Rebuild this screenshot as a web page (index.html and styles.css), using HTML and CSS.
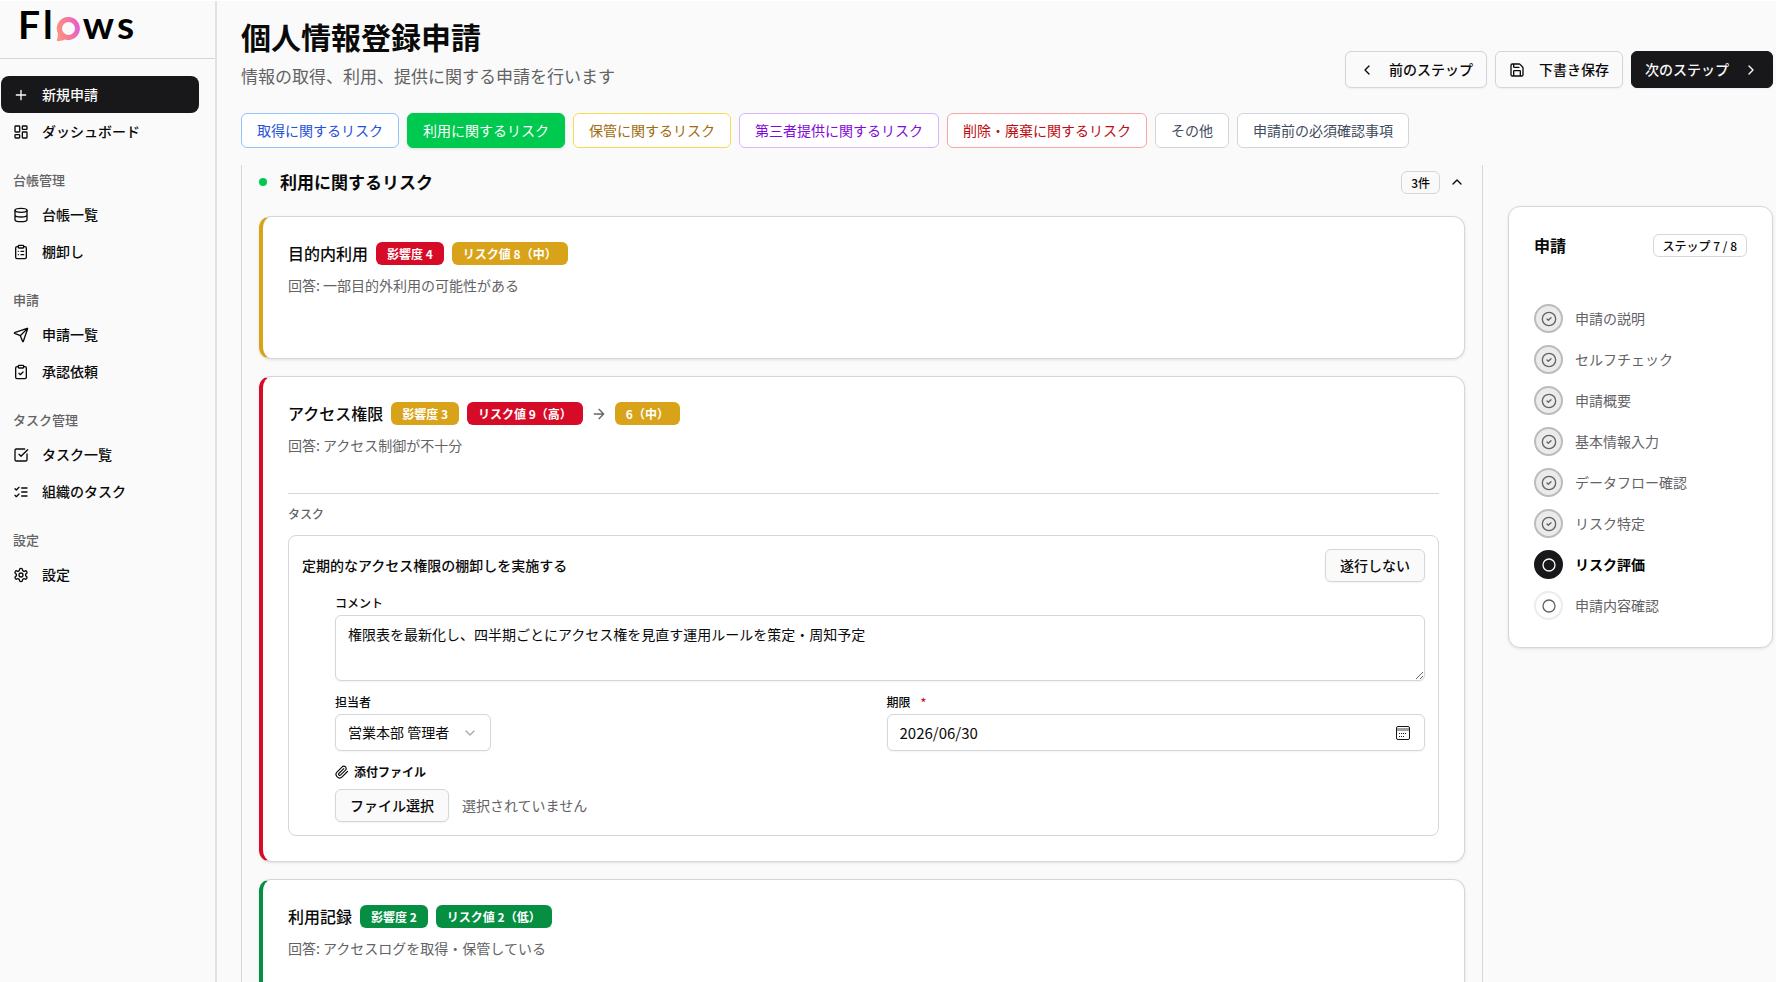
FILE: index.html
```html
<!DOCTYPE html>
<html lang="ja">
<head>
<meta charset="utf-8">
<meta name="viewport" content="width=device-width, initial-scale=1">
<title>個人情報登録申請 | Flows</title>
<link rel="stylesheet" href="styles.css">
</head>
<body>
<svg class="sprite" aria-hidden="true">
  <symbol id="check-circle" viewBox="0 0 24 24"><circle cx="12" cy="12" r="10"/><path d="m9 12 2 2 4-4"/></symbol>
  <symbol id="circle" viewBox="0 0 24 24"><circle cx="12" cy="12" r="9"/></symbol>
  <symbol id="chevron-left" viewBox="0 0 24 24"><path d="m15 18-6-6 6-6"/></symbol>
  <symbol id="chevron-right" viewBox="0 0 24 24"><path d="m9 18 6-6-6-6"/></symbol>
  <symbol id="chevron-up" viewBox="0 0 24 24"><path d="m18 15-6-6-6 6"/></symbol>
  <symbol id="chevron-down" viewBox="0 0 24 24"><path d="m6 9 6 6 6-6"/></symbol>
</svg>
<div class="app">
  <aside class="sidebar">
    <a class="logo" href="#" aria-label="Flows">
      <span class="logo-letter">F</span>
      <span class="logo-letter">l</span>
      <svg class="logo-mark" viewBox="0 0 24 24" aria-hidden="true">
        <defs><linearGradient id="mark" x1="0" y1="0.6" x2="1" y2="0.4"><stop offset="0" stop-color="#fb9483"/><stop offset="0.5" stop-color="#f57a98"/><stop offset="1" stop-color="#e35bd8"/></linearGradient></defs>
        <path fill="url(#mark)" fill-rule="evenodd" d="M12.500 0A11.500 11.500 0 1 1 9 22.500C6.500 23.600 3.500 24 1.500 24C.600 24 .700 23.200 1 22.500C1.600 21 1.800 19.500 1.900 16.500A11.500 11.500 0 0 1 12.500 0ZM12.500 5A6.500 6.500 0 1 0 12.500 18A6.500 6.500 0 1 0 12.500 5Z"/>
      </svg>
      <span class="logo-letter">w</span>
      <span class="logo-letter">s</span>
    </a>
    <nav class="nav">
      <a class="nav-item is-primary" href="#"><svg class="icon" viewBox="0 0 24 24"><path d="M5 12h14M12 5v14"/></svg>新規申請</a>
      <a class="nav-item" href="#"><svg class="icon" viewBox="0 0 24 24"><rect x="3" y="3" width="7" height="9" rx="1"/><rect x="14" y="3" width="7" height="5" rx="1"/><rect x="14" y="12" width="7" height="9" rx="1"/><rect x="3" y="16" width="7" height="5" rx="1"/></svg>ダッシュボード</a>
      <h2 class="nav-label">台帳管理</h2>
      <a class="nav-item" href="#"><svg class="icon" viewBox="0 0 24 24"><ellipse cx="12" cy="5" rx="9" ry="3"/><path d="M3 5v14a9 3 0 0 0 18 0V5M3 12a9 3 0 0 0 18 0"/></svg>台帳一覧</a>
      <a class="nav-item" href="#"><svg class="icon" viewBox="0 0 24 24"><rect x="8" y="2" width="8" height="4" rx="1"/><path d="M16 4h2a2 2 0 0 1 2 2v14a2 2 0 0 1-2 2H6a2 2 0 0 1-2-2V6a2 2 0 0 1 2-2h2M12 11h4M12 16h4M8 11h.01M8 16h.01"/></svg>棚卸し</a>
      <h2 class="nav-label">申請</h2>
      <a class="nav-item" href="#"><svg class="icon" viewBox="0 0 24 24"><path d="M14.500 21.700a.5.5 0 0 0 .9 0l6.500-19a.5.5 0 0 0-.6-.6l-19 6.500a.5.5 0 0 0 0 .9l7.900 3.200a2 2 0 0 1 1.100 1.100zM21.900 2.100 10.900 13.100"/></svg>申請一覧</a>
      <a class="nav-item" href="#"><svg class="icon" viewBox="0 0 24 24"><rect x="8" y="2" width="8" height="4" rx="1"/><path d="M16 4h2a2 2 0 0 1 2 2v14a2 2 0 0 1-2 2H6a2 2 0 0 1-2-2V6a2 2 0 0 1 2-2h2m1 10 2 2 4-4"/></svg>承認依頼</a>
      <h2 class="nav-label">タスク管理</h2>
      <a class="nav-item" href="#"><svg class="icon" viewBox="0 0 24 24"><path d="M21 10.500V19a2 2 0 0 1-2 2H5a2 2 0 0 1-2-2V5a2 2 0 0 1 2-2h12.500M9 11l3 3L22 4"/></svg>タスク一覧</a>
      <a class="nav-item" href="#"><svg class="icon" viewBox="0 0 24 24"><path d="m3 17 2 2 4-4M3 7l2 2 4-4M13 6h8M13 12h8M13 18h8"/></svg>組織のタスク</a>
      <h2 class="nav-label">設定</h2>
      <a class="nav-item" href="#"><svg class="icon" viewBox="0 0 24 24"><path d="M12.220 2h-.44a2 2 0 0 0-2 2v.18a2 2 0 0 1-1 1.730l-.43.25a2 2 0 0 1-2 0l-.15-.08a2 2 0 0 0-2.730.73l-.22.38a2 2 0 0 0 .73 2.730l.15.1a2 2 0 0 1 1 1.720v.51a2 2 0 0 1-1 1.740l-.15.09a2 2 0 0 0-.73 2.730l.22.38a2 2 0 0 0 2.730.73l.15-.08a2 2 0 0 1 2 0l.43.25a2 2 0 0 1 1 1.730V20a2 2 0 0 0 2 2h.44a2 2 0 0 0 2-2v-.18a2 2 0 0 1 1-1.730l.43-.25a2 2 0 0 1 2 0l.15.08a2 2 0 0 0 2.730-.73l.22-.39a2 2 0 0 0-.73-2.730l-.15-.08a2 2 0 0 1-1-1.740v-.5a2 2 0 0 1 1-1.740l.15-.09a2 2 0 0 0 .73-2.730l-.22-.38a2 2 0 0 0-2.730-.73l-.15.08a2 2 0 0 1-2 0l-.43-.25a2 2 0 0 1-1-1.730V4a2 2 0 0 0-2-2z"/><circle cx="12" cy="12" r="3"/></svg>設定</a>
    </nav>
  </aside>

  <main class="main">
    <header class="page-head">
      <div>
        <h1 class="page-title">個人情報登録申請</h1>
        <p class="page-sub">情報の取得、利用、提供に関する申請を行います</p>
      </div>
      <div class="actions">
        <button class="btn btn-lg" type="button"><svg class="icon"><use href="#chevron-left"/></svg>前のステップ</button>
        <button class="btn btn-lg" type="button"><svg class="icon" viewBox="0 0 24 24"><path d="M15.200 3a2 2 0 0 1 1.400.6l3.800 3.800a2 2 0 0 1 .6 1.400V19a2 2 0 0 1-2 2H5a2 2 0 0 1-2-2V5a2 2 0 0 1 2-2zM17 21v-7a1 1 0 0 0-1-1H8a1 1 0 0 0-1 1v7M7 3v4a1 1 0 0 0 1 1h7"/></svg>下書き保存</button>
        <button class="btn btn-lg btn-dark" type="button">次のステップ<svg class="icon"><use href="#chevron-right"/></svg></button>
      </div>
    </header>

    <div class="tabs">
      <button class="tab tab-blue" type="button">取得に関するリスク</button>
      <button class="tab tab-green" type="button">利用に関するリスク</button>
      <button class="tab tab-yellow" type="button">保管に関するリスク</button>
      <button class="tab tab-purple" type="button">第三者提供に関するリスク</button>
      <button class="tab tab-red" type="button">削除・廃棄に関するリスク</button>
      <button class="tab" type="button">その他</button>
      <button class="tab" type="button">申請前の必須確認事項</button>
    </div>

    <div class="content">
      <section class="panel">
        <div class="section-head">
          <span class="dot"></span>
          <h2 class="section-title">利用に関するリスク</h2>
          <span class="outline-badge">3件</span>
          <button class="fold" type="button" aria-label="折りたたむ"><svg class="icon"><use href="#chevron-up"/></svg></button>
        </div>

        <article class="card edge-amber">
          <div class="risk">
            <div class="risk-row"><h3 class="risk-title">目的内利用</h3><span class="badge red">影響度 4</span><span class="badge amber">リスク値 8（中）</span></div>
            <p class="answer">回答: 一部目的外利用の可能性がある</p>
          </div>
        </article>

        <article class="card edge-red">
          <div class="risk">
            <div class="risk-row"><h3 class="risk-title">アクセス権限</h3><span class="badge amber">影響度 3</span><span class="badge red">リスク値 9（高）</span><svg class="icon arrow" viewBox="0 0 24 24"><path d="M5 12h14M12 5l7 7-7 7"/></svg><span class="badge amber">6（中）</span></div>
            <p class="answer">回答: アクセス制御が不十分</p>
          </div>
          <div class="tasks">
            <h4 class="tasks-label">タスク</h4>
            <div class="task">
              <div class="task-head">
                <span class="task-title">定期的なアクセス権限の棚卸しを実施する</span>
                <button class="btn" type="button">遂行しない</button>
              </div>
              <div class="form">
                <div class="field">
                  <label class="label" for="comment">コメント</label>
                  <textarea class="control textarea" id="comment">権限表を最新化し、四半期ごとにアクセス権を見直す運用ルールを策定・周知予定</textarea>
                </div>
                <div class="columns">
                  <div class="field">
                    <label class="label" for="owner">担当者</label>
                    <div class="overlay select-box">
                      <select class="control select" id="owner"><option>営業本部 管理者</option></select>
                      <svg class="icon select-icon"><use href="#chevron-down"/></svg>
                    </div>
                  </div>
                  <div class="field">
                    <label class="label" for="due">期限<span class="required">*</span></label>
                    <div class="overlay">
                      <input class="control date" id="due" type="text" value="2026/06/30">
                      <button class="calendar" type="button" aria-label="日付を選択"><svg width="14" height="14" viewBox="0 0 14 14"><path d="M1 2h12v3H1z" fill="#a1a1a4"/><rect x="0.500" y="0.500" width="13" height="13" rx="1.500" fill="none" stroke="#18181b"/><path fill="#18181b" d="M5 7h1v1h-1zM7 7h1v1h-1zM9 7h1v1h-1zM3 7h1v1h-1zM3 10h1v1h-1zM5 10h1v1h-1zM7 10h1v1h-1z"/></svg></button>
                    </div>
                  </div>
                </div>
                <div class="field attach">
                  <span class="label"><svg class="icon clip" viewBox="0 0 24 24"><path d="m21.400 11.100-9.200 9.200a6 6 0 0 1-8.500-8.500l8.600-8.600a4 4 0 1 1 5.700 5.700l-8.600 8.500a2 2 0 0 1-2.800-2.800l8.500-8.500"/></svg>添付ファイル</span>
                  <div class="file-row">
                    <input class="file-input" id="file" type="file">
                    <label class="btn" for="file">ファイル選択</label>
                    <span class="file-name">選択されていません</span>
                  </div>
                </div>
              </div>
            </div>
          </div>
        </article>

        <article class="card edge-green">
          <div class="risk">
            <div class="risk-row"><h3 class="risk-title">利用記録</h3><span class="badge green">影響度 2</span><span class="badge green">リスク値 2（低）</span></div>
            <p class="answer">回答: アクセスログを取得・保管している</p>
          </div>
        </article>
      </section>

      <aside class="steps-card">
        <div class="steps-head"><h2 class="steps-title">申請</h2><span class="outline-badge">ステップ 7 / 8</span></div>
        <ol class="steps">
          <li class="step done"><span class="bullet"><svg class="icon"><use href="#check-circle"/></svg></span>申請の説明</li>
          <li class="step done"><span class="bullet"><svg class="icon"><use href="#check-circle"/></svg></span>セルフチェック</li>
          <li class="step done"><span class="bullet"><svg class="icon"><use href="#check-circle"/></svg></span>申請概要</li>
          <li class="step done"><span class="bullet"><svg class="icon"><use href="#check-circle"/></svg></span>基本情報入力</li>
          <li class="step done"><span class="bullet"><svg class="icon"><use href="#check-circle"/></svg></span>データフロー確認</li>
          <li class="step done"><span class="bullet"><svg class="icon"><use href="#check-circle"/></svg></span>リスク特定</li>
          <li class="step current" aria-current="step"><span class="bullet"><svg class="icon"><use href="#circle"/></svg></span>リスク評価</li>
          <li class="step"><span class="bullet"><svg class="icon"><use href="#circle"/></svg></span>申請内容確認</li>
        </ol>
      </aside>
    </div>
  </main>
</div>
</body>
</html>
```
FILE: styles.css
```css
:root {
  --ink: #0a0a0a;
  --muted: #636366;
  --line: #d6d6d8;
  --dark: #18181b;
  --red: #d50b27;
  --amber: #d9a319;
  --green: #068f43;
}

* { box-sizing: border-box; }

body {
  margin: 0;
  background: #fafafa;
  color: var(--ink);
  font: 400 14px/21px "Noto Sans CJK JP", "Noto Sans", sans-serif;
}

h1, h2, h3, h4, p, ol { margin: 0; padding: 0; }
button, input, select, textarea { font: inherit; color: inherit; }
a { color: inherit; text-decoration: none; }

.sprite { position: absolute; width: 0; height: 0; }

.icon {
  width: 16px;
  height: 16px;
  flex: none;
  fill: none;
  stroke: currentColor;
  stroke-width: 2;
  stroke-linecap: round;
  stroke-linejoin: round;
}

.app {
  display: grid;
  grid-template-columns: 217px minmax(0, 1fr);
  height: 100vh;
  overflow: hidden;
  border-top: 1px solid #fff;
}

/* Sidebar */
.sidebar { border-right: 2px solid #e2e2e4; }

.logo {
  display: flex;
  align-items: center;
  gap: 3px;
  height: 58px;
  padding: 0 0 12px 18px;
  border-bottom: 1px solid var(--line);
}

.logo-letter {
  font: 700 39px/44px Lato, sans-serif;
  color: #000;
}

.logo-mark { width: 24px; height: 24px; margin-top: 11px; }

.nav { padding: 17px 16px 0 1px; }

.nav-item {
  display: flex;
  align-items: center;
  gap: 13px;
  height: 37px;
  padding: 0 12px;
  border-radius: 8px;
  font-weight: 500;
}

.nav-item.is-primary { background: var(--dark); color: #fafafa; }

.nav-label {
  margin-top: 13px;
  padding: 0 12px;
  font-size: 13px;
  font-weight: 500;
  line-height: 33px;
  color: var(--muted);
}

/* Page */
.main {
  display: flex;
  flex-direction: column;
  min-height: 0;
  padding: 17px 3px 0 24px;
}

.page-head {
  display: flex;
  align-items: flex-end;
  justify-content: space-between;
  margin-bottom: 25px;
}

.page-title { font-size: 30px; line-height: 37px; font-weight: 700; }
.page-sub { margin-top: 8px; font-size: 17px; line-height: 25px; color: var(--muted); }

.actions { display: flex; gap: 8px; }

.btn {
  display: inline-flex;
  align-items: center;
  justify-content: center;
  height: 33px;
  padding: 0 14px;
  border: 1px solid var(--line);
  border-radius: 6px;
  background: #fafafa;
  font-weight: 500;
  white-space: nowrap;
  box-shadow: 0 1px 2px #0000000d;
}

.btn-lg { height: 37px; padding: 0 13px; gap: 14px; }
.btn-dark { background: var(--dark); border-color: var(--dark); color: #fafafa; }

.tabs { display: flex; flex-wrap: wrap; gap: 8px; margin-bottom: 17px; }

.tab {
  height: 35px;
  padding: 0 15px;
  border: 1px solid #d1d5dc;
  border-radius: 6px;
  background: #fff;
  color: #404b5c;
}

.tab-blue { border-color: #93c5fd; color: #2450dc; }
.tab-green { border-color: #00c950; background: #00c950; color: #fff; box-shadow: 0 1px 3px #0000001f; }
.tab-yellow { border-color: #f5dc50; color: #a16a0b; }
.tab-purple { border-color: #d8b4fe; color: #8209da; }
.tab-red { border-color: #f8a5a5; color: #bd0b12; }

.content {
  display: grid;
  grid-template-columns: minmax(0, 1fr) 265px;
  gap: 25px;
  flex: 1;
  min-height: 0;
}

.panel {
  display: flex;
  flex-direction: column;
  gap: 17px;
  padding: 0 17px 17px;
  border: solid var(--line);
  border-width: 0 1px;
  overflow-y: auto;
  scrollbar-width: none;
}

.section-head {
  display: flex;
  align-items: center;
  height: 34px;
  flex: none;
}

.dot { width: 8px; height: 8px; border-radius: 50%; background: #00c950; }
.section-title { margin: 0 auto 0 13px; font-size: 17px; line-height: 26px; font-weight: 600; }

.outline-badge {
  height: 23px;
  padding: 0 9px;
  border: 1px solid var(--line);
  border-radius: 6px;
  font-size: 12px;
  line-height: 21px;
  font-weight: 500;
}

.fold { display: flex; margin-left: 9px; padding: 0; border: 0; background: none; }

.card {
  flex: none;
  padding: 25px;
  border: 1px solid var(--line);
  border-left-width: 4px;
  border-radius: 12px;
  background: #fff;
  box-shadow: 0 1px 3px #0000001a;
}

.edge-amber { border-left-color: var(--amber); }
.edge-red { border-left-color: var(--red); }
.edge-green { border-left-color: var(--green); }

.risk { padding-bottom: 37px; }
.risk-row { display: flex; align-items: center; gap: 8px; height: 23px; }
.risk-title { font-size: 16px; font-weight: 500; }
.answer { margin-top: 10px; color: var(--muted); }

.badge {
  height: 23px;
  padding: 0 11px;
  border-radius: 6px;
  color: #fff;
  font-size: 12px;
  line-height: 23px;
  font-weight: 600;
}

.red { background: var(--red); }
.amber { background: var(--amber); }
.green { background: var(--green); }
.arrow { color: var(--muted); }

.tasks { border-top: 1px solid var(--line); padding-top: 11px; }
.tasks-label { font-size: 12px; line-height: 18px; font-weight: 500; color: var(--muted); }

.task {
  margin-top: 12px;
  padding: 13px;
  border: 1px solid var(--line);
  border-radius: 8px;
}

.task-head { display: flex; align-items: center; justify-content: space-between; }
.task-title { font-weight: 500; }

.form { display: grid; gap: 12px; padding: 12px 0 0 33px; }
.field { display: grid; gap: 3px; }
.columns { display: grid; grid-template-columns: 1fr 1fr; gap: 13px; }
.attach { gap: 8px; }

.label {
  display: flex;
  align-items: center;
  font-size: 12px;
  line-height: 18px;
  font-weight: 500;
}

.required { margin-left: 10px; color: var(--red); }
.clip { width: 14px; height: 14px; margin-right: 5px; }
.attach .label { font-weight: 600; }

.control {
  height: 37px;
  padding: 0 12px;
  border: 1px solid var(--line);
  border-radius: 6px;
  background: #fff;
  box-shadow: 0 1px 2px #0000000d;
}

.textarea { display: block; width: 100%; height: 66px; padding: 8px 12px; }

.overlay { display: grid; align-items: center; }
.overlay > * { grid-area: 1 / 1; }
.select-box { justify-content: start; }
.select { appearance: none; padding-right: 40px; }
.select-icon { justify-self: end; margin-right: 13px; color: #a9a9ab; pointer-events: none; }
.date { width: 100%; font-size: 15px; }

.calendar {
  display: flex;
  justify-self: end;
  margin-right: 15px;
  padding: 0;
  border: 0;
  background: none;
}

.file-row { display: flex; align-items: center; gap: 13px; }
.file-input { position: absolute; width: 1px; height: 1px; opacity: 0; }
.file-name { color: var(--muted); }

/* Steps */
.steps-card {
  align-self: start;
  margin-top: 41px;
  padding: 25px;
  border: 1px solid var(--line);
  border-radius: 12px;
  background: #fff;
  box-shadow: 0 1px 3px #0000001a;
}

.steps-head { display: flex; align-items: center; justify-content: space-between; height: 27px; }
.steps-title { font-size: 16px; font-weight: 600; }

.steps { display: grid; gap: 12px; padding: 45px 0 2px; list-style: none; }
.step { display: flex; align-items: center; gap: 12px; color: var(--muted); }

.bullet {
  display: grid;
  place-items: center;
  width: 29px;
  height: 29px;
  border: 2px solid #ececec;
  border-radius: 50%;
  background: #fff;
}

.done .bullet { border-color: #bcbcbc; background: #ebebeb; }
.current { color: #000; font-weight: 700; }
.current .bullet { border-color: var(--dark); background: var(--dark); color: #fafafa; }
```
